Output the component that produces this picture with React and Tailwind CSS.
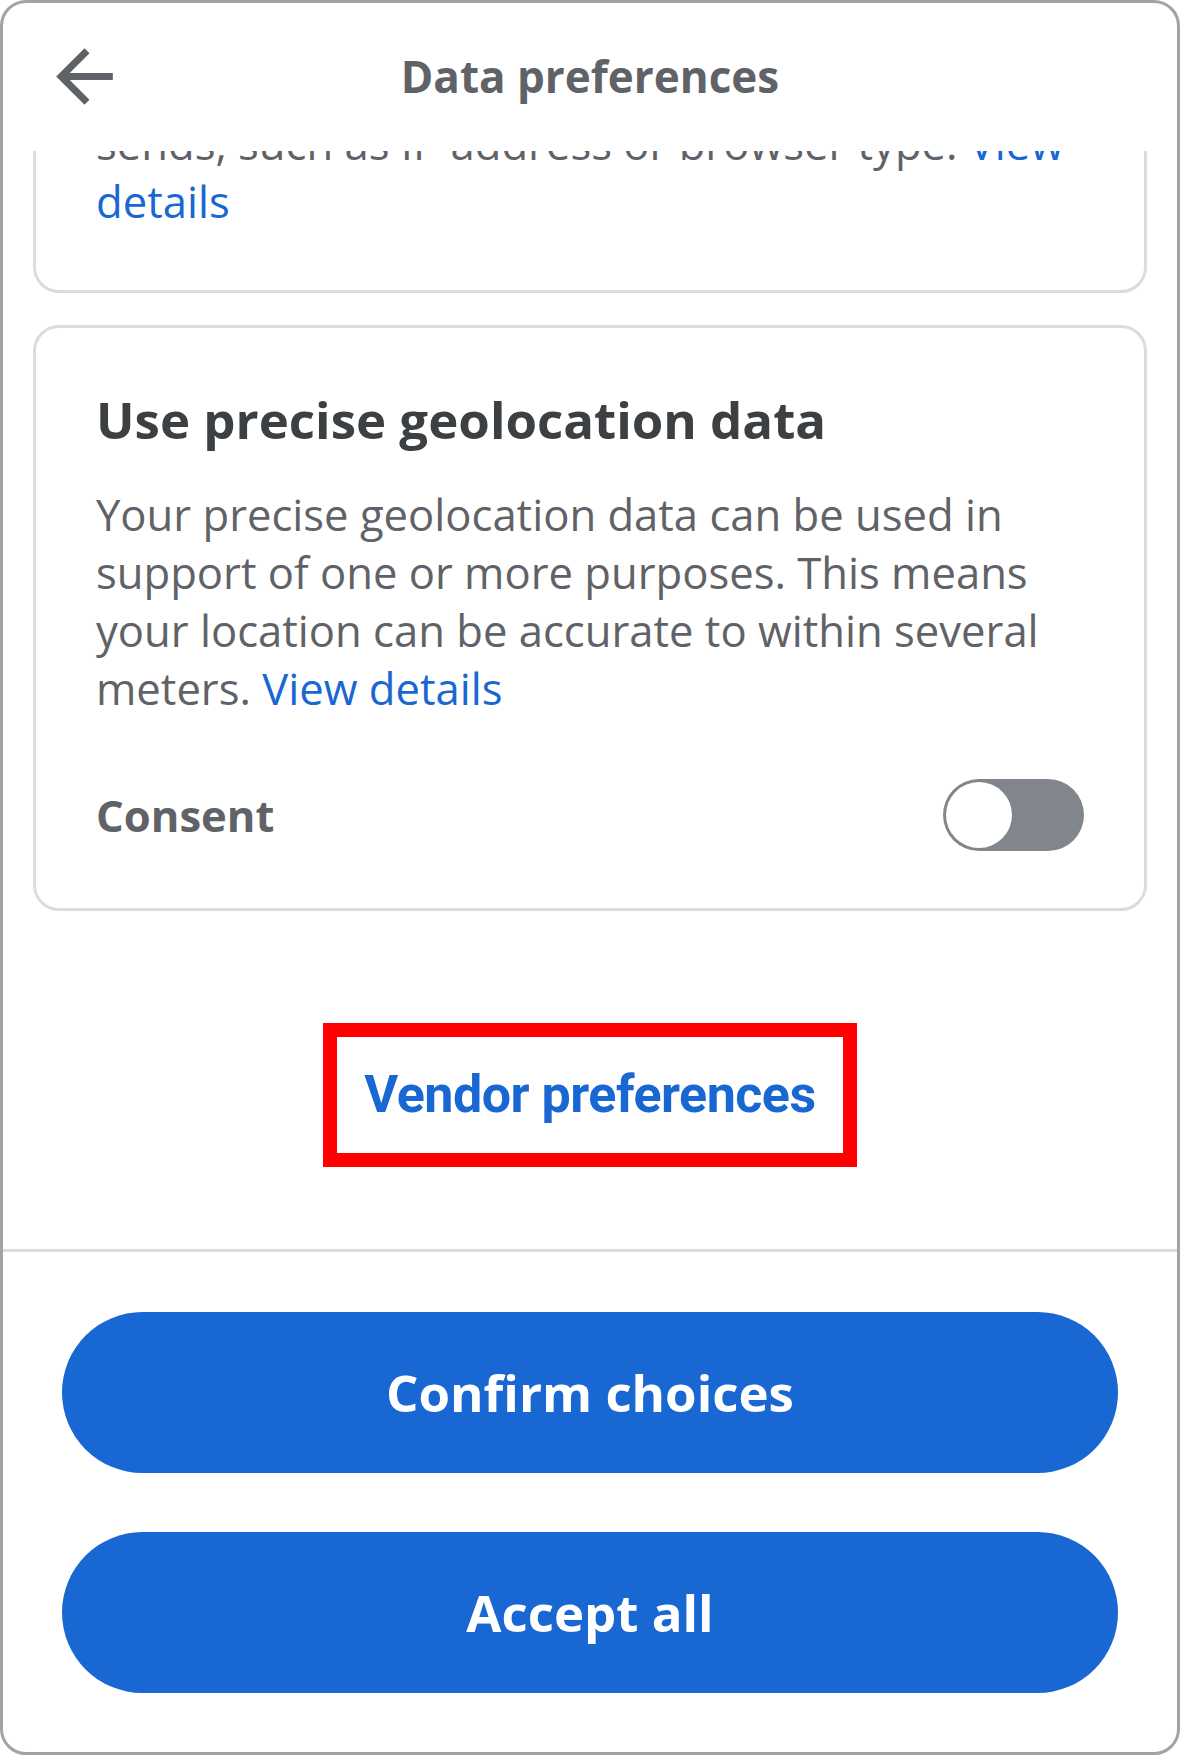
import React from 'react';

const body = { fontFamily: '"Open Sans", "Liberation Sans", sans-serif' };

const BackArrow = () => (
  <svg viewBox="0 0 24 24" className="w-[85px] h-[85px]" fill="#5f6368">
    <path d="M20 11H7.83l5.59-5.59L12 4l-8 8 8 8 1.41-1.41L7.83 13H20v-2z" />
  </svg>
);

const Toggle = () => (
  <div className="w-[141px] h-[72px] rounded-full bg-[#80868b] p-[3px] flex items-center">
    <div className="w-[66px] h-[66px] rounded-full bg-white" />
  </div>
);

export default function App() {
  return (
    <div style={body} className="w-[1180px] h-[1755px] bg-white border-[3px] border-[#a3a3a3] rounded-[26px] overflow-hidden flex flex-col">
      {/* header */}
      <div className="h-[148px] shrink-0 relative flex items-center justify-center">
        <button className="absolute left-[39px] top-[31px]">
          <BackArrow />
        </button>
        <h1 className="text-[44px] font-bold text-[#5f6368] -mt-[2px]">Data preferences</h1>
      </div>

      {/* scrolled content */}
      <div className="flex-1 overflow-hidden px-[30px]">
        <div className="-mt-[138px] flex flex-col gap-[32px]">
          <div className="border-[3px] border-[#dadce0] rounded-[26px] px-[60px] pt-[40px] pb-[60px]">
            <p className="text-[43.6px] leading-[58px] text-[#5f6368]">
              automatically when it connects to the internet,<br />
              sends, such as IP address or browser type. <span className="text-[#1967d2]">View</span><br />
              <span className="text-[#1967d2]">details</span>
            </p>
          </div>

          <div className="border-[3px] border-[#dadce0] rounded-[26px] px-[60px] pt-[60px] pb-[57px]">
            <h2 className="text-[51px] font-bold text-[#3c4043] leading-[62px]">Use precise geolocation data</h2>
            <p className="mt-[35px] text-[43.6px] leading-[58px] text-[#5f6368]">
              Your precise geolocation data can be used in support of one or more purposes. This means your location can be accurate to within several meters. <span className="text-[#1967d2]">View details</span>
            </p>
            <div className="mt-[62px] flex items-center justify-between">
              <span className="text-[43.6px] leading-[58px] font-bold text-[#5f6368]">Consent</span>
              <Toggle />
            </div>
          </div>

          <div className="flex justify-center mt-[80px]">
            <div className="border-[14px] border-[#ff0000] w-[534px] h-[144px] flex items-center justify-center">
              <span style={{ fontFamily: 'Roboto, "Liberation Sans", sans-serif' }} className="text-[52px] font-bold text-[#1967d2] tracking-[-0.5px]">
                Vendor preferences
              </span>
            </div>
          </div>
        </div>
      </div>

      {/* footer */}
      <div className="shrink-0 border-t-[3px] border-[#dadce0] px-[59px] pt-[60px] pb-[59px] flex flex-col gap-[59px]">
        <button className="h-[161px] rounded-full bg-[#1967d2] text-white text-[51px] font-bold">Confirm choices</button>
        <button className="h-[161px] rounded-full bg-[#1967d2] text-white text-[51px] font-bold">Accept all</button>
      </div>
    </div>
  );
}
